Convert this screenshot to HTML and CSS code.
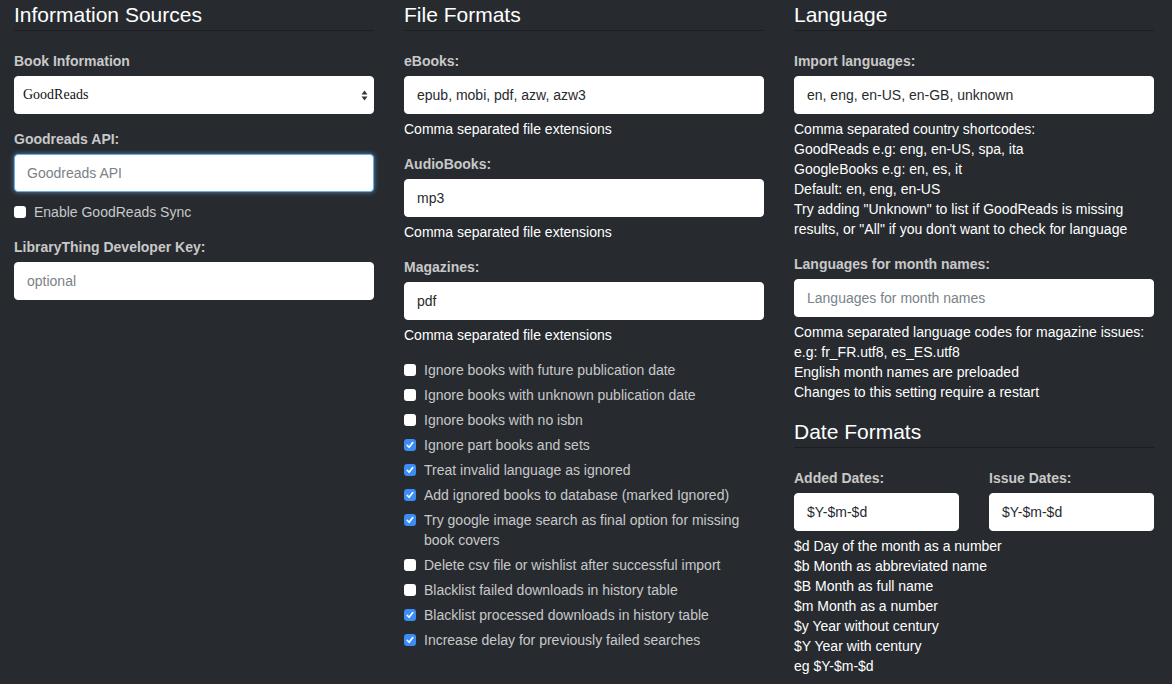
FILE: index.html
```html
<!DOCTYPE html>
<html>
<head>
<meta charset="utf-8">
<link rel="stylesheet" href="styles.css">
</head>
<body>
<div class="row">
  <div class="col">
    <div class="legend">Information Sources</div>
    <div class="group">
      <div class="label">Book Information</div>
      <div class="select"><span>GoodReads</span>
        <svg class="arrows" width="7" height="11" viewBox="0 0 7 11"><path d="M3.5 0.5L6.5 4.5H0.5Z M3.5 10.5L6.5 6.5H0.5Z" fill="#333"/></svg>
      </div>
    </div>
    <div class="group">
      <div class="label">Goodreads API:</div>
      <div class="input focus placeholder">Goodreads API</div>
      <div class="checkbox"><span class="cb"></span>Enable GoodReads Sync</div>
    </div>
    <div class="group">
      <div class="label">LibraryThing Developer Key:</div>
      <div class="input placeholder">optional</div>
    </div>
  </div>

  <div class="col">
    <div class="legend">File Formats</div>
    <div class="group">
      <div class="label">eBooks:</div>
      <div class="input">epub, mobi, pdf, azw, azw3</div>
      <div class="help">Comma separated file extensions</div>
    </div>
    <div class="group">
      <div class="label">AudioBooks:</div>
      <div class="input">mp3</div>
      <div class="help">Comma separated file extensions</div>
    </div>
    <div class="group">
      <div class="label">Magazines:</div>
      <div class="input">pdf</div>
      <div class="help">Comma separated file extensions</div>
    </div>
    <div class="checks">
      <div class="checkbox"><span class="cb"></span>Ignore books with future publication date</div>
      <div class="checkbox"><span class="cb"></span>Ignore books with unknown publication date</div>
      <div class="checkbox"><span class="cb"></span>Ignore books with no isbn</div>
      <div class="checkbox"><span class="cb on"><svg width="12" height="12" viewBox="0 0 12 12"><path d="M3.2 6.3L5.1 8.3L8.8 3.6" fill="none" stroke="#fff" stroke-width="1.6" stroke-linecap="round" stroke-linejoin="round"/></svg></span>Ignore part books and sets</div>
      <div class="checkbox"><span class="cb on"><svg width="12" height="12" viewBox="0 0 12 12"><path d="M3.2 6.3L5.1 8.3L8.8 3.6" fill="none" stroke="#fff" stroke-width="1.6" stroke-linecap="round" stroke-linejoin="round"/></svg></span>Treat invalid language as ignored</div>
      <div class="checkbox"><span class="cb on"><svg width="12" height="12" viewBox="0 0 12 12"><path d="M3.2 6.3L5.1 8.3L8.8 3.6" fill="none" stroke="#fff" stroke-width="1.6" stroke-linecap="round" stroke-linejoin="round"/></svg></span>Add ignored books to database (marked Ignored)</div>
      <div class="checkbox"><span class="cb on"><svg width="12" height="12" viewBox="0 0 12 12"><path d="M3.2 6.3L5.1 8.3L8.8 3.6" fill="none" stroke="#fff" stroke-width="1.6" stroke-linecap="round" stroke-linejoin="round"/></svg></span>Try google image search as final option for missing book covers</div>
      <div class="checkbox"><span class="cb"></span>Delete csv file or wishlist after successful import</div>
      <div class="checkbox"><span class="cb"></span>Blacklist failed downloads in history table</div>
      <div class="checkbox"><span class="cb on"><svg width="12" height="12" viewBox="0 0 12 12"><path d="M3.2 6.3L5.1 8.3L8.8 3.6" fill="none" stroke="#fff" stroke-width="1.6" stroke-linecap="round" stroke-linejoin="round"/></svg></span>Blacklist processed downloads in history table</div>
      <div class="checkbox"><span class="cb on"><svg width="12" height="12" viewBox="0 0 12 12"><path d="M3.2 6.3L5.1 8.3L8.8 3.6" fill="none" stroke="#fff" stroke-width="1.6" stroke-linecap="round" stroke-linejoin="round"/></svg></span>Increase delay for previously failed searches</div>
    </div>
  </div>

  <div class="col">
    <div class="legend">Language</div>
    <div class="group">
      <div class="label">Import languages:</div>
      <div class="input">en, eng, en-US, en-GB, unknown</div>
      <div class="help">Comma separated country shortcodes:<br>GoodReads e.g: eng, en-US, spa, ita<br>GoogleBooks e.g: en, es, it<br>Default: en, eng, en-US<br>Try adding "Unknown" to list if GoodReads is missing results, or "All" if you don't want to check for language</div>
    </div>
    <div class="group">
      <div class="label">Languages for month names:</div>
      <div class="input placeholder">Languages for month names</div>
      <div class="help">Comma separated language codes for magazine issues:<br>e.g: fr_FR.utf8, es_ES.utf8<br>English month names are preloaded<br>Changes to this setting require a restart</div>
    </div>
    <div class="legend">Date Formats</div>
    <div class="subrow">
      <div class="group">
        <div class="label">Added Dates:</div>
        <div class="input">$Y-$m-$d</div>
      </div>
      <div class="group">
        <div class="label">Issue Dates:</div>
        <div class="input">$Y-$m-$d</div>
      </div>
    </div>
    <div class="help tight">$d Day of the month as a number<br>$b Month as abbreviated name<br>$B Month as full name<br>$m Month as a number<br>$y Year without century<br>$Y Year with century<br>eg $Y-$m-$d</div>
  </div>
</div>
</body>
</html>
```

FILE: styles.css
```css
* { box-sizing: border-box; }
html, body { margin: 0; padding: 0; }
body {
  background: #272b30;
  color: #c8c8c8;
  font-family: "Liberation Sans", Arial, sans-serif;
  font-size: 14px;
  line-height: 20px;
  width: 1172px;
  height: 684px;
  overflow: hidden;
}
.row {
  display: grid;
  grid-template-columns: 360px 360px 360px;
  column-gap: 30px;
  padding-left: 14px;
}
.col { display: flow-root; }
.legend {
  font-size: 21px;
  line-height: 30px;
  color: #fff;
  border-bottom: 1px solid #1c1e22;
  margin-bottom: 20px;
  height: 31px;
}
.group { margin-bottom: 15px; }
.label {
  font-weight: bold;
  color: #c8c8c8;
  margin-bottom: 5px;
  height: 20px;
}
.input, .select {
  height: 38px;
  background: #fff;
  border: 1px solid #fff;
  border-radius: 4px;
  padding: 8px 12px;
  color: #272b30;
  white-space: nowrap;
}
.placeholder { color: #7a8288; }
.focus {
  border-color: #66afe9;
  box-shadow: 0 0 5px rgba(102,175,233,0.7);
}
.select {
  display: flex;
  align-items: center;
  justify-content: space-between;
  padding: 8px 5px 8px 8px;
  font-family: "Liberation Serif", "Times New Roman", serif;
  font-size: 14px;
  color: #111;
}
.arrows { display: block; }
.help {
  color: #fff;
  margin-top: 5px;
  margin-bottom: 10px;
}
.group > .help:last-child { margin-bottom: 0; }
.checkbox {
  position: relative;
  padding-left: 20px;
  margin-top: 10px;
  min-height: 20px;
}
.group > .checkbox:last-child { margin-bottom: 0; }
.checks .checkbox { margin-top: 5px; }
.checks .checkbox:first-child { margin-top: 0; }
.cb {
  position: absolute;
  left: 0;
  top: 4px;
  width: 12px;
  height: 12px;
  border-radius: 3px;
  background: #fff;
}
.cb.on { background: #3b8df5; }
.cb svg { display: block; }
.subrow {
  display: grid;
  grid-template-columns: 165px 165px;
  column-gap: 30px;
}
.subrow .group { margin-bottom: 0; }
.tight { margin-top: 5px; }
```
